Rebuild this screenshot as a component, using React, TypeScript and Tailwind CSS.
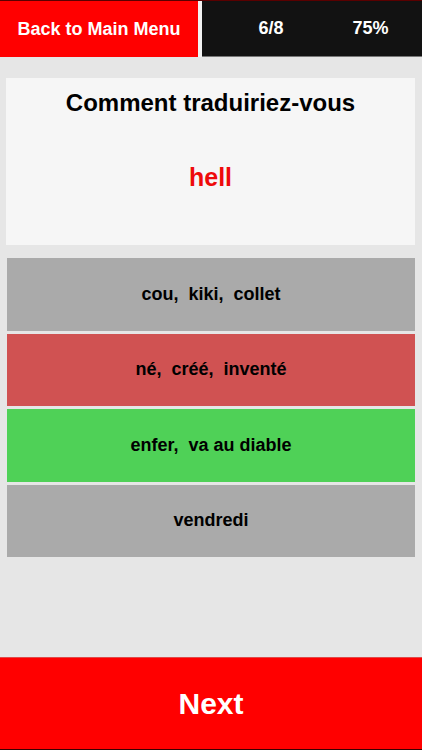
import React from "react";

const options = [
  { text: "cou,  kiki,  collet", bg: "bg-[#aaaaaa]" },
  { text: "né,  créé,  inventé", bg: "bg-[#d05252]" },
  { text: "enfer,  va au diable", bg: "bg-[#4fd157]" },
  { text: "vendredi", bg: "bg-[#aaaaaa]" },
];

export default function App() {
  return (
    <div
      className="w-[422px] h-[750px] flex flex-col bg-[#e6e6e6] overflow-hidden"
      style={{ fontFamily: '"Liberation Sans", Arial, sans-serif' }}
    >
      <div className="flex h-[57px] bg-[#f2f2f2] border-t border-[#5a0000]">
        <div className="w-[198px] flex items-center justify-center bg-[#ff0000] text-white font-bold text-[18px]">
          Back to Main Menu
        </div>
        <div className="ml-[4px] flex-1 flex items-center bg-[#121212] text-white font-bold text-[18px] border-b border-[#777777]">
          <div className="w-[138px] text-center">6/8</div>
          <div className="w-[61px] text-center">75%</div>
        </div>
      </div>

      <div className="mt-[21px] mx-[6px] w-[409px] h-[167px] bg-[#f6f6f6] flex flex-col items-center pt-[11px]">
        <div className="text-[24px] leading-[28px] font-bold text-black">Comment traduiriez-vous</div>
        <div className="mt-[45px] text-[25px] leading-[30px] font-bold text-[#ee0b0b]">hell</div>
      </div>

      <div className="mt-[13px] ml-[7px] w-[408px] flex flex-col gap-[3px]">
        {options.map((o) => (
          <div
            key={o.text}
            className={`${o.bg} h-[72.5px] flex items-center justify-center text-[18px] font-bold text-black whitespace-pre`}
          >
            {o.text}
          </div>
        ))}
      </div>

      <div className="flex-1" />

      <div className="h-[93px] bg-[#ff0000] border-t border-[#e04a4a] border-b border-b-[#3a0000] flex items-center justify-center text-white font-bold text-[30px]">
        Next
      </div>
    </div>
  );
}
